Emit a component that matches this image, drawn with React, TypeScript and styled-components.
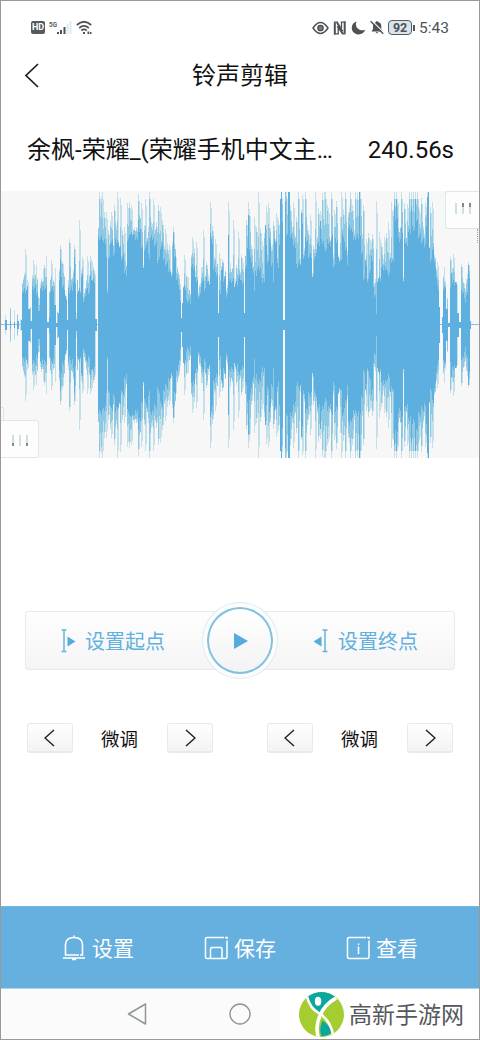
import React from 'react';
import styled, { createGlobalStyle } from 'styled-components';

const Global = createGlobalStyle`
  * { box-sizing: border-box; }
  body { margin: 0; background: #fff; }
`;

const Screen = styled.div`
  position: relative;
  width: 480px;
  height: 1040px;
  overflow: hidden;
  display: flex;
  flex-direction: column;
  background: #fff;
  border: 1px solid #999;
  color: #111;
  font-family: Roboto, 'Noto Sans CJK SC', sans-serif;
`;

const StatusBar = styled.div`
  height: 52px;
  padding: 1px 30px 0 30px;
  display: flex;
  align-items: center;
  justify-content: space-between;
  color: #4d5358;
`;
const StatusGroup = styled.div<{ $gap: number }>`
  display: flex;
  align-items: center;
  gap: ${(p) => p.$gap}px;
  svg { display: block; }
`;
const HdBadge = styled.span`
  width: 14px;
  height: 13px;
  border-radius: 2px;
  background: #555a5e;
  color: #fff;
  font: 700 9px/13px Roboto, sans-serif;
  text-align: center;
`;
const Battery = styled.span`
  width: 24px;
  height: 15px;
  border: 1.5px solid #555a5e;
  border-radius: 4px;
  background: #d8e6ec;
  font: 700 12.5px/13px Roboto, sans-serif;
  text-align: center;
`;
const BatteryTip = styled.span`
  width: 2px;
  height: 6px;
  margin-left: -3px;
  background: #555a5e;
`;
const Clock = styled.span`
  font-size: 15.5px;
  line-height: 18px;
`;

const Header = styled.header`
  height: 46px;
  display: grid;
  grid-template-columns: 60px 1fr 60px;
  align-items: center;
`;
const BackButton = styled.button`
  width: 60px;
  height: 44px;
  padding: 0 0 2px 24px;
  border: 0;
  background: none;
  display: flex;
  align-items: center;
`;
const Title = styled.h1`
  margin: 0;
  font-size: 24px;
  line-height: 36px;
  font-weight: 400;
  text-align: center;
`;

const TrackRow = styled.div`
  height: 92px;
  padding: 10px 25px 0 26px;
  display: flex;
  align-items: center;
  justify-content: space-between;
  font-size: 24px;
  line-height: 36px;
  white-space: nowrap;
`;

const WavePanel = styled.div`
  position: relative;
  height: 267px;
  background: #f7f7f7;
  svg { display: block; }
`;
const Handle = styled.div<{ $side: 'start' | 'end' }>`
  position: absolute;
  ${(p) => (p.$side === 'start' ? 'left: 0; bottom: 0;' : 'right: -1px; top: 0;')}
  width: ${(p) => (p.$side === 'start' ? 38 : 35)}px;
  height: 38px;
  border: 1.5px solid #dae8ea;
  ${(p) => (p.$side === 'start' ? 'border-left: 0; border-radius: 0 3px 3px 0;' : 'border-right: 0; border-radius: 3px 0 0 3px;')}
  background: #fdfdfd;
  display: flex;
  align-items: flex-start;
  gap: 5.5px;
  padding: ${(p) => (p.$side === 'start' ? '14px 0 0 11px' : '11px 0 0 9px')};
`;
const Grip = styled.i<{ $dark?: 'top' | 'bottom' }>`
  width: 1.5px;
  height: 11px;
  background: ${(p) =>
    p.$dark === 'top'
      ? 'linear-gradient(#888 35%, #cfe0e2 35%)'
      : p.$dark === 'bottom'
        ? 'linear-gradient(#cfe0e2 70%, #888 70%)'
        : '#cfe0e2'};
`;
const Tail = styled.i<{ $side: 'start' | 'end' }>`
  position: absolute;
  width: 3px;
  height: 14px;
  ${(p) =>
    p.$side === 'start'
      ? 'left: 0; bottom: 37px; border-right: 1.5px solid #dae8ea; border-top: 1px solid #dae8ea;'
      : 'right: -1px; top: 38px; border-left: 1.5px dotted #9aa4a8;'}
`;

const PointRow = styled.div`
  height: 78px;
  margin-top: 143px;
  padding: 0 24px;
  display: flex;
  align-items: center;
`;
const PointButton = styled.button<{ $end?: boolean }>`
  flex: none;
  width: 215px;
  height: 59px;
  padding: ${(p) => (p.$end ? '2px 0 0 73px' : '2px 0 0 35px')};
  border: 1.5px solid #e4ecf0;
  ${(p) => (p.$end ? 'border-left: 0; border-radius: 0 3px 3px 0;' : 'border-right: 0; border-radius: 3px 0 0 3px;')}
  background: linear-gradient(#fefefe, #f5f5f5);
  display: flex;
  align-items: center;
  gap: ${(p) => (p.$end ? 10 : 9)}px;
  color: #61b0de;
  font: 400 20px/30px Roboto, 'Noto Sans CJK SC', sans-serif;
  white-space: nowrap;
`;
const PointLabel = styled.span`
  padding-top: 2px;
`;
const PlayButton = styled.button`
  z-index: 1;
  flex: none;
  width: 76px;
  height: 77px;
  margin: 0 -38px;
  padding: 4px;
  border: 1.5px solid #e2eaed;
  border-radius: 50%;
  background: #fdfdfd;
`;
const PlayFace = styled.span`
  width: 100%;
  height: 100%;
  border: 2px solid #82c0e0;
  border-radius: 50%;
  background: linear-gradient(#fff, #f3f3f3);
  display: flex;
  align-items: center;
  justify-content: center;
  padding: 2px 0 0 2px;
`;

const TuneRow = styled.div`
  margin-top: 43px;
  padding: 0 26px;
  display: flex;
  justify-content: space-between;
`;
const TuneGroup = styled.div`
  width: 186px;
  display: flex;
  align-items: center;
  justify-content: space-between;
  font-size: 18.5px;
  line-height: 30px;
`;
const TuneLabel = styled.span`
  height: 32px;
  padding: 3px 1px 0 0;
`;
const StepButton = styled.button<{ $dir: 'left' | 'right' }>`
  width: 46px;
  height: 30px;
  padding: ${(p) => (p.$dir === 'left' ? '1px 2px 0 0' : '1px 0 0 1px')};
  border: 1.5px solid #e4ebee;
  border-bottom-width: 2px;
  border-radius: 3px;
  background: linear-gradient(#fefefe, #f3f3f3);
  display: flex;
  align-items: center;
  justify-content: center;
`;

const ActionBar = styled.nav`
  height: 83px;
  margin: auto -1px 0 0;
  padding: 0 62px 0 61px;
  border-top: 1px solid #72bbe0;
  border-bottom: 1px solid #a9d5ed;
  background: #65b0df;
  display: flex;
  align-items: center;
  justify-content: space-between;
`;
const Action = styled.button`
  padding: 0;
  border: 0;
  background: none;
  color: #fff;
  display: flex;
  align-items: center;
  gap: 6px;
  font: 400 21px/30px Roboto, 'Noto Sans CJK SC', sans-serif;
`;
const ActionLabel = styled.span`
  padding-top: 2px;
`;

const SystemNav = styled.div`
  height: 50px;
  flex: none;
  padding-left: 126px;
  display: flex;
  align-items: center;
  gap: 82px;
  background: #fbfbfb;
`;
const SiteMark = styled.div`
  position: absolute;
  left: 279px;
  bottom: -1px;
  width: 200px;
  height: 51px;
  padding: 0 0 0 17px;
  background: #fff;
  display: flex;
  align-items: center;
  gap: 5px;
  color: #55585c;
  font-size: 23px;
  line-height: 34px;
  white-space: nowrap;
`;
const SiteName = styled.span`
  padding-top: 3px;
`;

/* Body of the waveform: start x and amplitude, held until the next entry. */
const BODY = `0:0 5:5 7:0 10:4 11:0 14:3 15:0 17:4 19:0 21:5 22:35 28:16 30:4 32:38 36:33 38:14 40:35 43:38 47:3 49:8 50:35
54:20 56:2 58:12 59:45 61:50 62:36 65:28 67:5 68:35 71:36 73:42 76:6 77:35 81:48 83:25 86:36 88:34 90:48 92:44 95:6 97:0
98:88 103:83 106:67 107:28 108:67 110:84 113:72 115:84 118:78 121:68 124:55 126:46 127:86 130:92 134:88 137:82 139:92
141:78 143:60 144:75 146:83 148:68 150:86 154:82 157:65 158:65 160:78 163:66 165:62 168:56 170:50 173:56 174:68 176:48
178:38 180:24 181:7 182:24 183:36 186:25 190:24 191:58 195:44 198:30 201:44 204:36 206:44 208:43 210:84 213:55 216:48 218:12
219:34 221:56 223:46 226:30 228:60 229:45 234:41 238:46 241:44 244:12 245:60 247:74 250:64 252:55 254:35 255:52 257:56
261:43 263:46 265:78 267:65 269:84 271:58 273:44 274:85 277:60 279:80 281:102 283:5 285:122 286:92 289:126 290:88 293:78
296:60 298:63 301:98 303:68 305:84 308:70 312:48 314:68 317:82 320:65 321:84 324:75 327:82 331:88 333:60 335:84 338:64
341:68 342:92 343:86 345:75 347:62 348:96 353:86 355:88 359:133 360:85 361:72 363:48 365:62 367:43 369:54 371:65 373:37
374:31 376:11 377:46 381:56 384:58 387:52 390:64 393:60 394:104 396:108 398:86 401:94 403:43 404:82 408:94 412:96 415:105
418:90 421:84 424:80 426:95 428:133 429:80 430:64 432:78 434:60 436:46 437:36 439:18 440:0 442:8 443:38 445:34 446:16
448:2 450:36 452:43 456:38 457:12 459:3 461:34 464:25 466:30 468:46 470:4 471:0`;

/* Thin translucent spikes: x, amplitude, shade (l = pale, m = medium). */
const SPIKES = `5:10l 10:17m 14:15l 17:11m 20:6l 24:38m 25:76l 28:43l 30:18m 33:65l 36:60l 38:28m 41:46m 43:56l 44:60m 46:69l 49:34m
51:65l 53:45m 55:57l 57:14m 60:80m 62:64m 64:45l 66:26m 69:86m 72:48m 74:80m 76:12l 79:105l 82:68l 85:25m 87:69l 89:50m 91:66l 93:58m 95:50l
98:95m 99:133m 101:128m 102:133l 104:113m 106:113l 108:95m 110:104m 111:113l 114:120m 117:133l 120:127l 122:95m 124:98l
127:122l 129:123m 131:120l 134:98m 138:131m 141:122l 144:100m 145:126l 148:98m 149:133m 151:103l 153:126l 156:103m 158:120m
160:118l 162:105m 165:96l 168:75m 169:80l 172:83m 173:98m 175:68l 177:56m 179:45l 184:70l 186:50m 188:48l 191:68m
192:88l 196:83l 199:40m 201:58l 203:95l 206:50m 208:50l 210:123l 212:99m 215:86l 217:55m 219:72l 222:66m 224:48l 228:123l
230:50m 233:105l 236:60m 238:93l 241:70m 242:65l 246:105m 248:123l 249:115m 251:80m 254:108l 256:98m 258:133l 260:97m
262:84l 264:92m 266:119l 268:122l 271:78m 273:104m 276:112l 278:105m 280:124m 281:133m 282:127m 285:133m 286:133m 288:133m
290:120m 293:123l 296:108m 298:133m 301:115m 302:130l 305:133m 308:95m 310:110l 313:80m 315:133l 318:117m 320:114l
322:132m 324:133l 325:133m 327:120m 328:117l 331:133m 334:115l 336:124m 340:108l 341:133l 343:116m 345:133m 348:108m
350:133m 352:120m 355:133m 357:132m 360:133m 363:120m 366:86l 368:92m 370:85l 372:91m 376:124l 379:93l 381:82m 384:88l 386:92m
388:103l 391:123l 393:115m 394:133m 396:133m 397:125l 401:133m 404:122m 407:121l 409:133m 411:133m 413:133m 415:133m 417:133m
419:115l 421:127m 425:122l 427:133m 430:118m 432:123l 434:70m 437:63l 443:49m 444:58l 447:27m 450:68m 453:71l 455:42m
457:40l 461:61m 464:41l 467:38m 468:63m`;

/* Columns darkened almost to the tip of their spike. */
const PEAKS = `60:66 74:68 107:28 138:105 173:92 210:92 228:90 248:110 265:100 280:126 281:133 288:133 289:133 301:112 320:104
359:133 394:120 396:126 411:118 415:126 427:128 428:133 451:52 468:60`;

const WAVE_WIDTH = 480;
const MAX = 133;

function buildWave() {
  const body = new Array<number>(WAVE_WIDTH).fill(0);
  const mid = new Array<number>(WAVE_WIDTH).fill(0);
  const pale = new Array<number>(WAVE_WIDTH).fill(0);
  const dark = new Array<number>(WAVE_WIDTH).fill(0);
  const steps = BODY.trim().split(/\s+/).map((s) => s.split(':').map(Number));
  steps.forEach(([x, h], i) => {
    const end = i + 1 < steps.length ? steps[i + 1][0] : WAVE_WIDTH;
    for (let k = x; k < end; k++) {
      const jitter = ((k * 37) % 11) - 5;
      body[k] = h > 20 && h < 130 ? h + jitter * 0.7 : h;
      mid[k] = h > 20 ? body[k] + ((k * 53) % 13) * 1.1 : h;
      pale[k] = h > 20 ? mid[k] + ((k * 29) % 7) : h;
    }
  });
  SPIKES.trim().split(/\s+/).forEach((s) => {
    const [x, rest] = s.split(':');
    const at = Number(x);
    const h = parseInt(rest, 10);
    const base = Math.max(body[at], body[at + 1]);
    if (rest.endsWith('m')) {
      mid[at] = Math.max(mid[at], h * 0.95);
      if (body[at + 1] > 12) {
        mid[at + 1] = Math.max(mid[at + 1], base + (h - base) * 0.45);
        pale[at + 1] = Math.max(pale[at + 1], h * 0.95);
      }
    } else if (h > 60 && body[at + 1] > 12) {
      mid[at] = Math.max(mid[at], base + (h - base) * 0.4);
      pale[at + 1] = Math.max(pale[at + 1], base + (h - base) * 0.85);
    }
    pale[at] = Math.max(pale[at], h);
  });
  PEAKS.trim().split(/\s+/).forEach((s) => {
    const [x, h] = s.split(':').map(Number);
    dark[x] = h;
  });
  const toPath = (values: number[]) =>
    values
      .map((h, x) => {
        const a = Math.min(MAX, Math.round(h));
        return a > 0 ? `M${x} ${134 - a}h1v${a * 2}h-1z` : '';
      })
      .join('');
  return { body: toPath(body), mid: toPath(mid), pale: toPath(pale), dark: toPath(dark) };
}

const wave = buildWave();

function Waveform() {
  return (
    <svg width="478" height="267" viewBox="1 0 478 267" shapeRendering="crispEdges">
      <path d="M0 133h480v1H0z" fill="#8cc0d8" />
      <path d={wave.pale} fill="#c5e0e8" />
      <path d={wave.mid} fill="#8fc8e2" />
      <path d={wave.dark} fill="#5cafdf" />
      <path d={wave.body} fill="#5cafdf" />
    </svg>
  );
}

function Chevron({ dir, w, h, stroke = 1.4 }: { dir: 'left' | 'right'; w: number; h: number; stroke?: number }) {
  const points = dir === 'left' ? `${w - 1},1 1,${h / 2} ${w - 1},${h - 1}` : `1,1 ${w - 1},${h / 2} 1,${h - 1}`;
  return (
    <svg width={w} height={h} fill="none" stroke="#1c1f21" strokeWidth={stroke}>
      <polyline points={points} />
    </svg>
  );
}

function PointIcon({ end }: { end?: boolean }) {
  return (
    <svg width="15" height="24" viewBox="0 0 15 24">
      <g transform={end ? 'translate(15 0) scale(-1 1)' : undefined}>
        <path d="M0.5 1h5M0.5 22.5h5M3 1v21.5" fill="none" stroke="#68b3de" strokeWidth="1.5" />
        <path d="M6.5 7.5v10l8-5z" fill="#55aade" />
      </g>
    </svg>
  );
}

function FineTune() {
  return (
    <TuneGroup>
      <StepButton $dir="left"><Chevron dir="left" w={11} h={18} /></StepButton>
      <TuneLabel>微调</TuneLabel>
      <StepButton $dir="right"><Chevron dir="right" w={11} h={18} /></StepButton>
    </TuneGroup>
  );
}

export default function App() {
  return (
    <>
      <Global />
      <Screen>
        <StatusBar>
          <StatusGroup $gap={4}>
            <HdBadge>HD</HdBadge>
            <svg width="23" height="15" viewBox="0 0 23 15">
              <text x="0" y="7" fontSize="8" fontWeight="700" fontFamily="Roboto, sans-serif" textLength="8" lengthAdjust="spacingAndGlyphs" fill="#555a5e">5G</text>
              <path d="M8 12h2v2H8zM11 10h2v4h-2zM14.500 7h2v7h-2z" fill="#4d5256" />
              <path d="M17.500 3.500h2V14h-2zM20.500 1h2v13h-2z" fill="#dcebf2" />
            </svg>
            <svg width="17" height="15" viewBox="0 0 17 15" fill="none" stroke="#4d5256" strokeWidth="1.7">
              <path d="M.8 5Q8 -1.500 15.200 5M3.200 8Q8 3.800 12.800 8M5.300 10.500Q8 8.200 10.700 10.500" />
              <path d="M7 12h2v2H7zM11.500 11.500h1.800V14h-1.800zM14 12h1.500v2H14z" fill="#4d5256" stroke="none" />
            </svg>
          </StatusGroup>
          <StatusGroup $gap={4}>
            <svg width="17" height="14" viewBox="0 0 17 14" fill="none" stroke="#4d5256" strokeWidth="1.5">
              <path d="M1 7Q8.500 -4 16 7Q8.500 18 1 7z" />
              <circle cx="8.500" cy="7" r="2.600" fill="#77838a" />
            </svg>
            <svg width="14" height="14" viewBox="0 0 14 14" fill="none" stroke="#4d5256">
              <path d="M1.800 13.500V1.500M4 1.500L9.500 10.500M4.500 5L10 13M11.700 .5V12.500" strokeWidth="2" />
              <path d="M1 12.800h4.200V6M1 1.200h4M12.500 12.800h-3M12.500 1.200H8.500V7" strokeWidth="1.300" />
            </svg>
            <svg width="15" height="14" viewBox="0 0 15 14">
              <path d="M5.500 0.500C.2 2 -.7 8.500 3 11.700C6.800 15 12.500 13.500 14.300 8.800C8.500 11 3.200 6.500 5.500.5z" fill="#4d5256" />
            </svg>
            <svg width="14" height="15" viewBox="0 0 14 15">
              <path d="M1.500 11.500L3 9V6C3 3.500 4.500 2.300 6 2C6.200.5 7.800.5 8 2C10 2.300 11.300 3.500 11.300 6V9L13 11.500zM5.500 12.300h3Q7 14.500 5.500 12.300z" fill="#4d5256" />
              <path d="M1.500 .3L14 12.800" stroke="#fff" strokeWidth="1.200" />
              <path d="M.6 1.200L13.200 13.800" stroke="#4d5256" strokeWidth="1.400" />
            </svg>
            <Battery>92</Battery>
            <BatteryTip />
            <Clock>5:43</Clock>
          </StatusGroup>
        </StatusBar>

        <Header>
          <BackButton aria-label="返回"><Chevron dir="left" w={14} h={25} stroke={1.7} /></BackButton>
          <Title>铃声剪辑</Title>
        </Header>

        <TrackRow>
          <span>余枫-荣耀_(荣耀手机中文主…</span>
          <span>240.56s</span>
        </TrackRow>

        <WavePanel>
          <Waveform />
          <Tail $side="start" />
          <Handle $side="start"><Grip $dark="bottom" /><Grip /><Grip $dark="bottom" /></Handle>
          <Handle $side="end"><Grip /><Grip $dark="top" /><Grip $dark="top" /></Handle>
          <Tail $side="end" />
        </WavePanel>

        <PointRow>
          <PointButton><PointIcon /><PointLabel>设置起点</PointLabel></PointButton>
          <PlayButton aria-label="播放">
            <PlayFace>
              <svg width="14" height="16"><path d="M0 0v16l14-8z" fill="#55aade" /></svg>
            </PlayFace>
          </PlayButton>
          <PointButton $end><PointIcon end /><PointLabel>设置终点</PointLabel></PointButton>
        </PointRow>

        <TuneRow>
          <FineTune />
          <FineTune />
        </TuneRow>

        <ActionBar>
          <Action>
            <svg width="24" height="26" viewBox="0 0 24 26" fill="none" stroke="#fff" strokeWidth="1.6">
              <path d="M17 20H3.500V10Q3.500 2.500 12 2.500Q20.500 2.500 20.500 10V20H18M12 0.500v2M1 23h22M10 24.500h4" />
            </svg>
            <ActionLabel>设置</ActionLabel>
          </Action>
          <Action>
            <svg width="24" height="24" viewBox="0 0 24 24" fill="none" stroke="#fff" strokeWidth="1.5">
              <path d="M20 1.500H3Q1.500 1.500 1.500 3V21Q1.500 22.500 3 22.500H21.500Q23 22.500 23 21V4.500M21 1.500h2v1.500M6.500 22V13Q6.500 11.500 8 11.500H16.500Q18 11.500 18 13V22" />
            </svg>
            <ActionLabel>保存</ActionLabel>
          </Action>
          <Action>
            <svg width="24" height="24" viewBox="0 0 24 24" fill="none" stroke="#fff" strokeWidth="1.5">
              <path d="M20 1.500H3Q1.500 1.500 1.500 3V21Q1.500 22.500 3 22.500H21.500Q23 22.500 23 21V4.500M21 1.500h2v1.500M12.500 10.500v7.500M12.500 7.500v1.500" />
            </svg>
            <ActionLabel>查看</ActionLabel>
          </Action>
        </ActionBar>

        <SystemNav>
          <svg width="20" height="22" viewBox="0 0 20 22" fill="none" stroke="#8f9699" strokeWidth="1.5">
            <path d="M18.500 1v20L1.500 11z" strokeLinejoin="round" />
          </svg>
          <svg width="22" height="22" fill="none" stroke="#8f9699" strokeWidth="1.4">
            <circle cx="11" cy="11" r="10" />
          </svg>
        </SystemNav>

        <SiteMark>
          <svg width="47" height="47" viewBox="0 0 48 48">
            <defs>
              <clipPath id="disc"><circle cx="25" cy="24" r="23" /></clipPath>
            </defs>
            <g clipPath="url(#disc)">
              <path d="M0 0h48v48H0z" fill="#a5cd32" />
              <path d="M10 5Q14 17 23 22Q29 14 40 7L32 0H14z" fill="#0aa79c" />
              <path d="M26 30Q22 40 25 46Q30 47 35 43Q35 36 26 30z" fill="#0aa79c" />
              <path d="M10 5Q13 18 23 23Q34 30 37 45" fill="none" stroke="#fff" strokeWidth="2.600" />
              <path d="M40 7Q28 14 24 24Q18 36 22 48" fill="none" stroke="#fff" strokeWidth="3.600" />
              <ellipse cx="21.500" cy="10.500" rx="3.300" ry="4.600" fill="#fff" />
            </g>
          </svg>
          <SiteName>高新手游网</SiteName>
        </SiteMark>
      </Screen>
    </>
  );
}
